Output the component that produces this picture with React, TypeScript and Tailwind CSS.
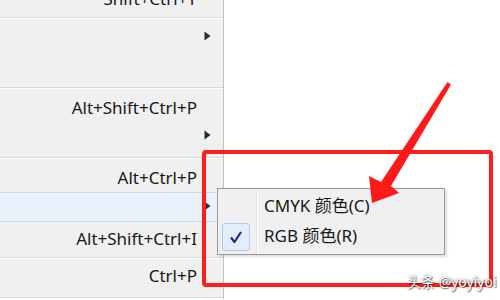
import React from "react";

type Row = {
  h: string;
  label?: string;
  arrow?: boolean;
  shift?: string;
  active?: boolean;
  sep?: boolean;
};

const rows: Row[] = [
  { h: "h-[37px]", label: "Shift+Ctrl+Y" },
  { h: "", sep: true },
  { h: "h-[33px]", arrow: true },
  { h: "h-[35px]" },
  { h: "", sep: true },
  { h: "h-[35px]", label: "Alt+Shift+Ctrl+P", shift: "pt-[2px]" },
  { h: "h-[33px]", arrow: true, shift: "pb-[11px]" },
  { h: "", sep: true },
  { h: "h-[33px]", label: "Alt+Ctrl+P", shift: "pt-[4px]" },
  { h: "h-[30px]", arrow: true, active: true, shift: "pb-[3px]" },
  { h: "h-[35px]", label: "Alt+Shift+Ctrl+I", shift: "pb-[3px]" },
  { h: "", sep: true },
  { h: "h-[38px]", label: "Ctrl+P", shift: "pb-[6px]" },
  { h: "", sep: true },
];

function Arrow() {
  return (
    <svg width="7" height="10" viewBox="0 0 7 10" className="block">
      <path d="M0.5 0.5 L6.5 5 L0.5 9.5 Z" fill="#2b2b2b" />
    </svg>
  );
}

function MenuRow({ row }: { row: Row }) {
  if (row.sep) {
    return (
      <div className="flex flex-col">
        <div className="h-px bg-[#d9d9d9]" />
        <div className="h-px bg-white" />
      </div>
    );
  }
  return (
    <div
      className={`flex items-center justify-end ${row.h} ${row.shift ?? ""} ${
        row.active ? "bg-[#e9f1fb] border-y border-[#c9dbf1]" : ""
      }`}
    >
      {row.label && <span className="text-[17px] leading-none text-[#181818]">{row.label}</span>}
      <div className="w-[26px] flex pl-[7px]">{row.arrow && <Arrow />}</div>
    </div>
  );
}

export default function App() {
  return (
    <div
      className="relative w-[500px] h-[300px] overflow-hidden bg-white"
      style={{ fontFamily: '"Noto Sans", "Noto Sans CJK SC", sans-serif' }}
    >
      {/* main menu */}
      <div className="w-[224px] -mt-[20px] bg-[#f0f0f0] border-r border-[#c3c3c3] flex flex-col">
        {rows.map((r, i) => (
          <MenuRow key={i} row={r} />
        ))}
      </div>

      {/* submenu */}
      <div className="absolute left-[217px] top-[188px] w-[228px] h-[67px] bg-[#f0f0f0] border border-[#9a9a9a] shadow-[2px_2px_2px_rgba(0,0,0,0.12)] flex">
        <div className="w-[39px] flex flex-col items-start pl-[4px] pt-[3px] gap-[3px] border-r border-[#e2e3e3]">
          <div className="w-[28px] h-[28px]" />
          <div className="w-[28px] h-[28px] rounded-[3px] bg-[#e3eefb] border border-[#aecbed] flex items-center justify-center">
            <svg width="14" height="14" viewBox="0 0 14 14">
              <path d="M2 7.5 L5.5 12 L12 2" fill="none" stroke="#1f2a8c" strokeWidth="2.2" strokeLinejoin="round" />
            </svg>
          </div>
        </div>
        <div className="border-l border-white flex flex-col pl-[6px] pt-[8px] gap-[12px] text-[17px] leading-[18px] text-[#181818]">
          <span>CMYK 颜色(C)</span>
          <span>RGB 颜色(R)</span>
        </div>
      </div>

      {/* red highlight box */}
      <div className="absolute left-[202px] top-[150px] w-[291px] h-[137px] border-[4px] border-[#ff1e1e] rounded-[4px]" />

      {/* red arrow */}
      <svg className="absolute left-0 top-0" width="500" height="300" viewBox="0 0 500 300">
        <polygon
          points="447.5,82 451,84.5 391,186 399,193 372,203 369,176 381,182"
          fill="#ff1a1a"
        />
      </svg>

      {/* watermark */}
      <div
        className="absolute left-[407px] top-[273px] text-[14px] leading-[18px] text-white"
        style={{ textShadow: "0 0 2px rgba(0,0,0,0.6), 1px 1px 1px rgba(0,0,0,0.5)" }}
      >
        头条 @yoyiyoi
      </div>
    </div>
  );
}
